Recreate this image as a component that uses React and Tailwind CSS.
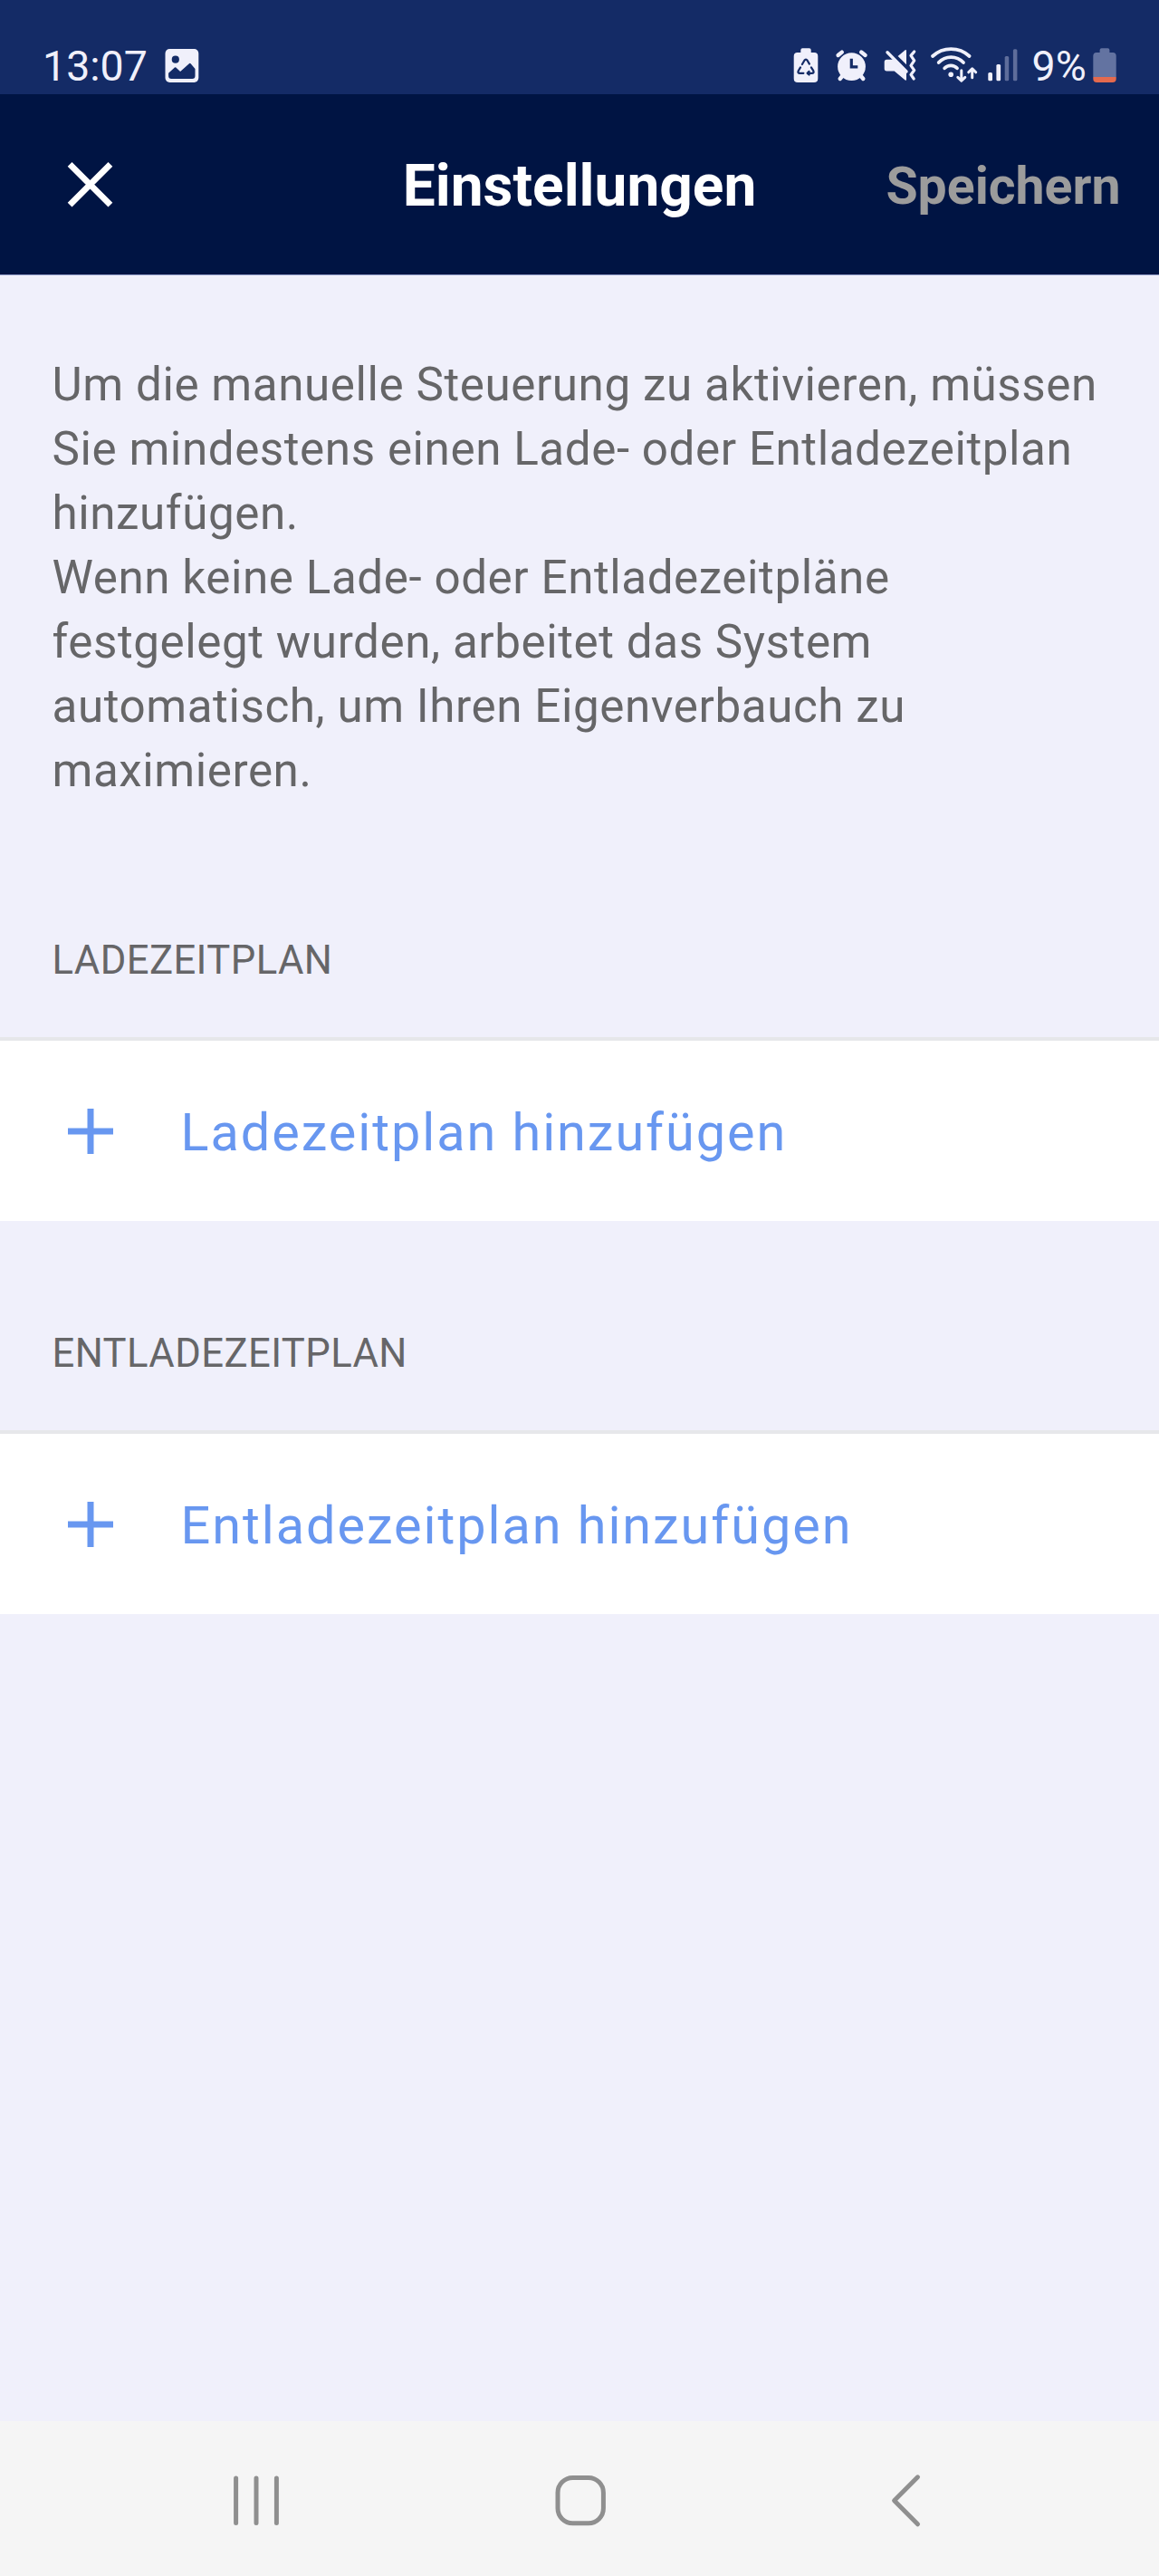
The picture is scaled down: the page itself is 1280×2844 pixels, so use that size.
function PictureIcon() {
  return (
    <svg className="block h-[48px] w-[44px]" viewBox="178 48 44 48">
      <rect x="182.5" y="54.1" width="36.8" height="36.8" rx="4.8" fill="#f0f0fb" />
      <circle cx="193.8" cy="65.7" r="4.1" fill="#142b66" />
      <path d="M186.1 80.8 192.9 74.4Q193.6 73.9 194.3 74.5L199.1 79 208.9 70.2Q209.8 69.5 210.6 70.3L215.5 76V83.8Q215.5 87 212.3 87H189.3Q186.1 87 186.1 83.8Z" fill="#142b66" />
    </svg>
  );
}

function RecycleBatteryIcon() {
  return (
    <svg className="block h-[48px] w-[40px]" viewBox="872 48 40 48">
      <path d="M884.3 58V55.3Q884.3 53.3 886.3 53.3H893.7Q895.7 53.3 895.7 55.3V58H899.3Q903.3 58 903.3 62V86.7Q903.3 91 899 91H881Q876.7 91 876.7 86.7V62Q876.7 58 880.7 58Z" fill="#f0f0fb" />
      <g fill="none" stroke="#142b66" strokeWidth="2.2" strokeLinecap="round" strokeLinejoin="round">
        <path d="M885.9 71 888.4 66.7Q890 64.4 891.6 66.7L893.9 70.6" />
        <path d="M884 74.4 881.7 78.2Q880.6 80.8 883.3 80.8H887.4" />
        <path d="M895.9 74.4 898.3 78.2Q899.4 80.8 896.7 80.8H892M893.6 78.9 891.6 80.8 893.6 82.5" />
      </g>
    </svg>
  );
}

function AlarmIcon() {
  return (
    <svg className="block h-[48px] w-[56px]" viewBox="912 48 56 48">
      <circle cx="940.5" cy="73.6" r="15.4" fill="#f0f0fb" />
      <path d="M940.3 64.8V73.8H947.3" fill="none" stroke="#142b66" strokeWidth="3.2" />
      <g stroke="#f0f0fb" strokeWidth="4.4" strokeLinecap="round">
        <path d="M925.6 61 929.8 57.6M951.2 57.6 955.6 61" />
        <path d="M930.6 83.5 927.7 87M950.4 83.5 953.3 87" />
      </g>
    </svg>
  );
}

function MutedIcon() {
  return (
    <svg className="block h-[48px] w-[52px]" viewBox="968 48 52 48">
      <path d="M979.3 65.8H986.5L1001 80.4V87.6Q1001 89.6 999.4 88.3L987.7 78.4H979.3Q976.7 78.4 976.7 75.8V68.4Q976.7 65.8 979.3 65.8Z" fill="#f0f0fb" />
      <path d="M991.6 62 999.4 55.4Q1001 54.2 1001 56.2V71.2Z" fill="#f0f0fb" />
      <path d="M980 57.8 1001 79" stroke="#f0f0fb" strokeWidth="3.4" strokeLinecap="round" />
      <path d="M1009.7 57 1006 61.4 1009.7 66.9 1006 72.3 1009.7 77.6 1006 82.4 1009.2 87" fill="none" stroke="#f0f0fb" strokeWidth="3.2" strokeLinecap="round" strokeLinejoin="round" />
    </svg>
  );
}

function WifiIcon() {
  return (
    <svg className="block h-[48px] w-[64px]" viewBox="1020 48 64 48">
      <g fill="none" stroke="#f0f0fb" strokeWidth="3.8" strokeLinecap="round" strokeLinejoin="round">
        <path d="M1030 62A30 30 0 0 1 1070.6 62" />
        <path d="M1036.7 69A18.6 18.6 0 0 1 1064 69" />
        <path d="M1043.2 75.3A9.6 9.6 0 0 1 1057 75.3" />
        <path strokeWidth="3" d="M1061.8 77.8V89M1057.8 85.4 1061.8 89.3 1065.8 85.4" />
        <path strokeWidth="3" d="M1073.7 85.8V76M1069.7 79.8 1073.7 75.8 1077.7 79.8" />
      </g>
      <circle cx="1050.2" cy="82.3" r="2.8" fill="#f0f0fb" />
    </svg>
  );
}

function SignalIcon() {
  return (
    <svg className="block h-[48px] w-[52px]" viewBox="1084 48 52 48">
      <rect x="1091.3" y="80" width="4.7" height="9.3" rx="1.5" fill="#f0f0fb" />
      <rect x="1100.4" y="71" width="4.7" height="18.3" rx="1.5" fill="#f0f0fb" />
      <rect x="1109.7" y="62" width="4.5" height="27.3" rx="1.5" fill="#5e6d9b" />
      <rect x="1118.9" y="54.2" width="4.5" height="35.1" rx="1.5" fill="#5e6d9b" />
    </svg>
  );
}

function BatteryIcon() {
  return (
    <svg className="block h-[48px] w-[40px]" viewBox="1200 48 40 48">
      <path d="M1214.6 58V55.3Q1214.6 53.3 1216.6 53.3H1223.4Q1225.4 53.3 1225.4 55.3V58H1229Q1232.7 58 1232.7 61.8V85.1H1207.3V61.8Q1207.3 58 1211 58Z" fill="#6373a1" />
      <path d="M1207.3 85H1232.7V87Q1232.7 91 1228.7 91H1211.3Q1207.3 91 1207.3 87Z" fill="#e46a4e" />
    </svg>
  );
}

function StatusBar() {
  return (
    <div className="flex h-[104px] justify-between bg-[#142b66] pr-[40px] pl-[47px] text-[46.5px] leading-[48px] text-[#f0f0fb]">
      <div className="flex pt-[48px]">
        <span className="w-[131px] pt-[1px]">13:07</span>
        <PictureIcon />
      </div>
      <div className="flex pt-[48px]">
        <RecycleBatteryIcon />
        <AlarmIcon />
        <MutedIcon />
        <WifiIcon />
        <SignalIcon />
        <span className="w-[64px] pt-[1px] pl-[3.6px]">9%</span>
        <BatteryIcon />
      </div>
    </div>
  );
}

function Header() {
  return (
    <header className="grid h-[200px] grid-cols-[1fr_auto_1fr] items-start border-b border-[#98a2cc] bg-[#001443]">
      <button className="mt-[74px] ml-[70px] w-[60px]" aria-label="Schließen">
        <svg className="block h-[60px] w-[60px]" viewBox="0 0 60 60">
          <path d="M7.1 3.4 51.9 48.2M51.9 3.4 7.1 48.2" stroke="#fff" strokeWidth="6.8" />
        </svg>
      </button>
      <h1 className="mt-[62px] text-[64px] leading-[80px] font-bold text-white">Einstellungen</h1>
      <button className="mt-[62px] mr-[42.5px] justify-self-end text-[57.2px] leading-[80px] font-bold text-[#9c9c9c]">Speichern</button>
    </header>
  );
}

function ScheduleSection({ title, action }) {
  return (
    <section className="h-[434px]">
      <h2 className="h-[113px] pt-px pl-[57.5px] text-[43.6px] leading-[56px] tracking-[0.42px] text-[#666668]">{title}</h2>
      <button className="flex h-[203px] w-full items-center border-t-4 border-[#e6e7ea] bg-white pl-[74.5px] text-left text-[57.6px] tracking-[1.95px] text-[#6897f0]">
        <svg className="mr-[75px] block h-[50px] w-[50px]" viewBox="0 0 50 50">
          <path d="M25 0V50M0 25H50" stroke="#6897f0" strokeWidth="7" />
        </svg>
        <span className="pt-[5px] leading-[66px]">{action}</span>
      </button>
    </section>
  );
}

function NavigationBar() {
  return (
    <nav className="grid h-[171px] grid-cols-[283px_1fr_279px] bg-[#f5f5f5] pt-[50px]">
      <svg className="block h-[76px] w-[76px] translate-x-[38px] justify-self-end" viewBox="0 0 76 76" fill="none" stroke="#8f8f8f" strokeWidth="5" strokeLinecap="round">
        <path d="M15.6 13V62.5M38 13V62.5M60.4 13V62.5" />
      </svg>
      <svg className="block h-[76px] w-[76px] justify-self-center" viewBox="0 0 76 76" fill="none" stroke="#8f8f8f" strokeWidth="5">
        <rect x="12" y="12.4" width="50.4" height="50.4" rx="16.5" />
      </svg>
      <svg className="block h-[76px] w-[76px] -translate-x-[38px]" viewBox="0 0 76 76" fill="none" stroke="#8f8f8f" strokeWidth="5" strokeLinecap="round" strokeLinejoin="round">
        <path d="M50.5 11.8 24.6 37.7 50.5 63.8" />
      </svg>
    </nav>
  );
}

export default function App() {
  return (
    <div className="flex h-[2844px] w-[1280px] flex-col overflow-hidden bg-[#f0f0fb] font-['Roboto',sans-serif]">
      <StatusBar />
      <Header />
      <main className="flex-1 pt-[85px]">
        <p className="mb-[146px] pl-[57.5px] text-[51.2px] leading-[71px] tracking-[0.56px] whitespace-nowrap text-[#666668]">
          Um die manuelle Steuerung zu aktivieren, müssen
          <br />
          Sie mindestens einen Lade- oder Entladezeitplan
          <br />
          hinzufügen.
          <br />
          Wenn keine Lade- oder Entladezeitpläne
          <br />
          festgelegt wurden, arbeitet das System
          <br />
          automatisch, um Ihren Eigenverbauch zu
          <br />
          maximieren.
        </p>
        <ScheduleSection title="LADEZEITPLAN" action="Ladezeitplan hinzufügen" />
        <ScheduleSection title="ENTLADEZEITPLAN" action="Entladezeitplan hinzufügen" />
      </main>
      <NavigationBar />
    </div>
  );
}
